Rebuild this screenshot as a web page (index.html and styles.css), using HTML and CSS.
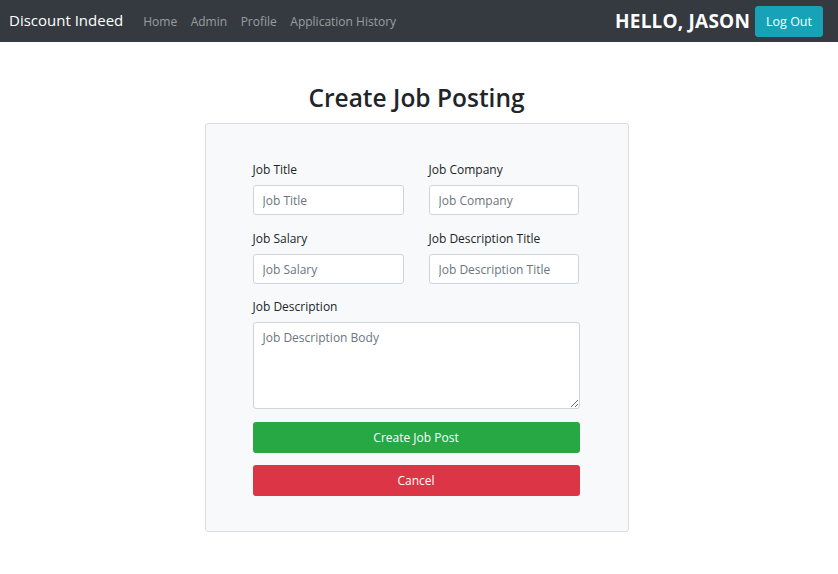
FILE: index.html
```html
<!DOCTYPE html>
<html lang="en">
<head>
<meta charset="utf-8">
<title>Create Job Posting</title>
<link rel="stylesheet" href="styles.css">
</head>
<body>
<nav class="navbar">
  <a class="brand" href="#">Discount Indeed</a>
  <ul class="nav-links">
    <li><a href="#">Home</a></li>
    <li><a href="#">Admin</a></li>
    <li><a href="#">Profile</a></li>
    <li><a href="#">Application History</a></li>
  </ul>
  <div class="nav-right">
    <span class="hello">HELLO, JASON</span>
    <button class="btn-logout" type="button">Log Out</button>
  </div>
</nav>
<main class="main">
  <h1 class="title">Create Job Posting</h1>
  <div class="card">
    <form class="form">
      <div class="grid">
        <div class="field">
          <label class="label">Job Title</label>
          <input class="input" type="text" placeholder="Job Title">
        </div>
        <div class="field">
          <label class="label">Job Company</label>
          <input class="input" type="text" placeholder="Job Company">
        </div>
        <div class="field">
          <label class="label">Job Salary</label>
          <input class="input" type="text" placeholder="Job Salary">
        </div>
        <div class="field">
          <label class="label">Job Description Title</label>
          <input class="input" type="text" placeholder="Job Description Title">
        </div>
      </div>
      <div class="field">
        <label class="label">Job Description</label>
        <textarea class="input textarea" placeholder="Job Description Body"></textarea>
      </div>
      <button class="btn btn-success" type="button">Create Job Post</button>
      <button class="btn btn-danger" type="button">Cancel</button>
    </form>
  </div>
</main>
</body>
</html>
```
FILE: styles.css
```css
* { box-sizing: border-box; }
html, body { margin: 0; padding: 0; }
body {
  font-family: "Open Sans", "Noto Sans", "Liberation Sans", sans-serif;
  color: #212529;
  background: #fff;
}
.navbar {
  height: 42px;
  background: #343a40;
  display: flex;
  align-items: center;
  padding: 0 15px 0 9px;
}
.brand {
  color: #fff;
  text-decoration: none;
  font-size: 15px;
  margin-right: 20px;
  padding-bottom: 3px;
}
.nav-links {
  list-style: none;
  margin: 0;
  padding: 0 0 3px;
  display: flex;
  gap: 13.5px;
}
.nav-links a {
  color: rgba(255,255,255,.5);
  text-decoration: none;
  font-size: 12px;
}
.nav-right {
  margin-left: auto;
  display: flex;
  align-items: center;
  gap: 5px;
}
.hello {
  color: #fff;
  font-weight: 700;
  font-size: 19px;
  letter-spacing: 0.2px;
}
.btn-logout {
  background: #17a2b8;
  border: 1px solid #17a2b8;
  color: #fff;
  border-radius: 3px;
  height: 31px;
  padding: 0 10px;
  font-family: inherit;
  font-size: 12.5px;
}
.main {
  display: flex;
  flex-direction: column;
  align-items: center;
  padding-right: 5px;
}
.title {
  margin: 41px 0 10px;
  font-size: 24.5px;
  font-weight: 600;
  line-height: 30px;
}
.card {
  width: 424px;
  background: #f8f9fa;
  border: 1px solid #dcdcdc;
  border-radius: 3px;
  padding: 36px 48px 35px 47px;
}
.form { display: flex; flex-direction: column; }
.grid {
  display: grid;
  grid-template-columns: 151px 150px;
  column-gap: 25px;
  row-gap: 14px;
  margin-bottom: 13px;
}
.field { display: flex; flex-direction: column; }
.label {
  font-size: 12px;
  line-height: 18px;
  padding-top: 1px;
  margin-bottom: 6px;
}
.input {
  height: 30px;
  border: 1px solid #ced4da;
  border-radius: 3px;
  background: #fff;
  padding: 0 9px;
  font-family: inherit;
  font-size: 12px;
  color: #495057;
}
.input::placeholder { color: #6c757d; }
.textarea {
  height: 87px;
  padding: 6px 9px;
  resize: vertical;
}
.btn {
  height: 31px;
  border: none;
  border-radius: 3px;
  color: #fff;
  font-family: inherit;
  font-size: 12px;
}
.btn-success { background: #28a745; margin-top: 13px; }
.btn-danger { background: #dc3545; margin-top: 12px; }
```
